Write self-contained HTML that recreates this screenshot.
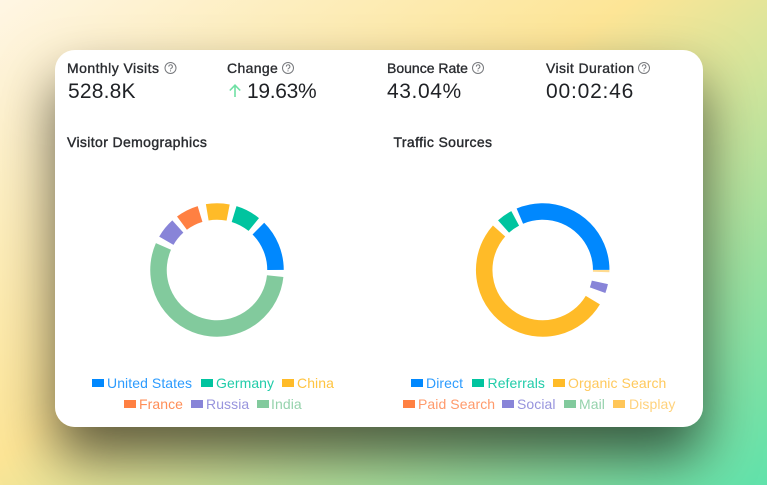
<!DOCTYPE html>
<html>
<head>
<meta charset="utf-8">
<style>
html,body{margin:0;padding:0}
body{width:767px;height:485px;overflow:hidden;position:relative;font-family:"Liberation Sans",sans-serif;
background:linear-gradient(144deg,#fff6e4 0%,#fdeebf 20%,#fde596 44%,#d5e59b 59%,#9fe2a0 77%,#60e2ab 100%);}
#shadow{position:absolute;left:55px;top:50px;width:648px;height:377px;border-radius:20px;box-shadow:0 30px 55px 0 rgba(0,0,0,.6)}
#card{position:absolute;left:55px;top:50px;width:648px;height:377px;border-radius:20px;background:#fff}
.t{position:absolute;white-space:nowrap;color:#2a2c30;filter:blur(.3px)}
.l{font-size:14px;line-height:18px;-webkit-text-stroke:.35px #2a2c30}
.v{font-size:21px;line-height:24px;color:#1f2125}
.h{font-size:14px;line-height:18px;-webkit-text-stroke:.4px #2a2c30;letter-spacing:.37px}
.lg{position:absolute;font-size:14px;line-height:18px;white-space:nowrap;filter:blur(.25px);letter-spacing:.08px}
.s{position:absolute;width:12px;height:8px}
svg{position:absolute;left:0;top:0}
</style>
</head>
<body>
<div id="shadow"></div>
<div id="card"></div>

<div class="t l" style="left:67px;top:59px;letter-spacing:.45px">Monthly Visits</div>
<div class="t l" style="left:227px;top:59px;letter-spacing:.35px">Change</div>
<div class="t l" style="left:387px;top:59px;letter-spacing:0">Bounce Rate</div>
<div class="t l" style="left:546px;top:59px;letter-spacing:.4px">Visit Duration</div>
<div class="t v" style="left:68px;top:80px;letter-spacing:.2px">528.8K</div>
<div class="t v" style="left:247px;top:80px;letter-spacing:-.3px">19.63%</div>
<div class="t v" style="left:387px;top:80px;letter-spacing:.6px">43.04%</div>
<div class="t v" style="left:546px;top:80px;letter-spacing:.8px">00:02:46</div>
<div class="t h" style="left:67px;top:133px">Visitor Demographics</div>
<div class="t h" style="left:393.5px;top:133px">Traffic Sources</div>

<svg width="767" height="485" viewBox="0 0 767 485" fill="none">
  <g stroke="#77797d" stroke-width="1">
    <circle cx="170.5" cy="68" r="5.5"/><circle cx="288" cy="68" r="5.5"/><circle cx="478" cy="68" r="5.5"/><circle cx="644" cy="68" r="5.5"/>
    <path d="M168.8 66.6a1.8 1.8 0 1 1 2.6 1.6c-.6.3-.9.6-.9 1.2"/>
    <path d="M286.3 66.6a1.8 1.8 0 1 1 2.6 1.6c-.6.3-.9.6-.9 1.2"/>
    <path d="M476.3 66.6a1.8 1.8 0 1 1 2.6 1.6c-.6.3-.9.6-.9 1.2"/>
    <path d="M642.3 66.6a1.8 1.8 0 1 1 2.6 1.6c-.6.3-.9.6-.9 1.2"/>
  </g>
  <g fill="#77797d"><circle cx="170.5" cy="70.9" r=".6"/><circle cx="288" cy="70.9" r=".6"/><circle cx="478" cy="70.9" r=".6"/><circle cx="644" cy="70.9" r=".6"/></g>
  <path d="M235 97V85.5M229.8 90.5L235 85.2L240.2 90.5" stroke="#6fe0a4" stroke-width="1.6"/>

  <g fill="none" stroke-width="16.5">
    <circle cx="217" cy="270" r="58.5" pathLength="360" stroke="#0088fe" stroke-dasharray="45 360" transform="rotate(-45 217 270)"/>
    <circle cx="217" cy="270" r="58.5" pathLength="360" stroke="#00c49f" stroke-dasharray="22 360" transform="rotate(-73 217 270)"/>
    <circle cx="217" cy="270" r="58.5" pathLength="360" stroke="#ffbb28" stroke-dasharray="20.6 360" transform="rotate(-99.6 217 270)"/>
    <circle cx="217" cy="270" r="58.5" pathLength="360" stroke="#ff8042" stroke-dasharray="20 360" transform="rotate(-126.8 217 270)"/>
    <circle cx="217" cy="270" r="58.5" pathLength="360" stroke="#8884d8" stroke-dasharray="18 360" transform="rotate(-150 217 270)"/>
    <circle cx="217" cy="270" r="58.5" pathLength="360" stroke="#82ca9d" stroke-dasharray="198 360" transform="rotate(6 217 270)"/>

    <circle cx="542.7" cy="270" r="58.5" pathLength="360" stroke="#0088fe" stroke-dasharray="113 360" transform="rotate(-113 542.7 270)"/>
    <circle cx="542.7" cy="270" r="58.5" pathLength="360" stroke="#ffdb90" stroke-dasharray="2 360" transform="rotate(0 542.7 270)"/>
    <circle cx="542.7" cy="270" r="58.5" pathLength="360" stroke="#00c49f" stroke-dasharray="14 360" transform="rotate(-132 542.7 270)"/>
    <circle cx="542.7" cy="270" r="58.5" pathLength="360" stroke="#ffbb28" stroke-dasharray="191 360" transform="rotate(31 542.7 270)"/>
    <circle cx="542.7" cy="270" r="58.5" pathLength="360" stroke="#8884d8" stroke-dasharray="8 360" transform="rotate(12.2 542.7 270)"/>
  </g>
</svg>

<div class="s" style="left:92px;top:379px;background:#0088fe"></div><div class="lg" style="left:107px;top:374px;color:#2c9bfe">United States</div>
<div class="s" style="left:201px;top:379px;background:#00c49f"></div><div class="lg" style="left:216px;top:374px;color:#21cca9">Germany</div>
<div class="s" style="left:282px;top:379px;background:#ffbb28"></div><div class="lg" style="left:297px;top:374px;color:#ffc440">China</div>
<div class="s" style="left:124px;top:400px;background:#ff8042"></div><div class="lg" style="left:139px;top:395px;color:#ff8e57">France</div>
<div class="s" style="left:191px;top:400px;background:#8884d8"></div><div class="lg" style="left:206px;top:395px;color:#9794dd">Russia</div>
<div class="s" style="left:257px;top:400px;background:#82ca9d"></div><div class="lg" style="left:271px;top:395px;color:#95d2ac">India</div>

<div class="s" style="left:411px;top:379px;background:#0088fe"></div><div class="lg" style="left:426px;top:374px;color:#2c9bfe">Direct</div>
<div class="s" style="left:472px;top:379px;background:#00c49f"></div><div class="lg" style="left:487.5px;top:374px;color:#21cca9">Referrals</div>
<div class="s" style="left:553px;top:379px;background:#ffbb28"></div><div class="lg" style="left:568px;top:374px;color:#ffc95c">Organic Search</div>
<div class="s" style="left:403px;top:400px;background:#ff8042"></div><div class="lg" style="left:418px;top:395px;color:#ff9a6b">Paid Search</div>
<div class="s" style="left:502px;top:400px;background:#8884d8"></div><div class="lg" style="left:517px;top:395px;color:#9794dd">Social</div>
<div class="s" style="left:564px;top:400px;background:#82ca9d"></div><div class="lg" style="left:579px;top:395px;color:#95d2ac">Mail</div>
<div class="s" style="left:613px;top:400px;background:#ffc658"></div><div class="lg" style="left:629px;top:395px;color:#ffd27c">Display</div>
</body>
</html>
